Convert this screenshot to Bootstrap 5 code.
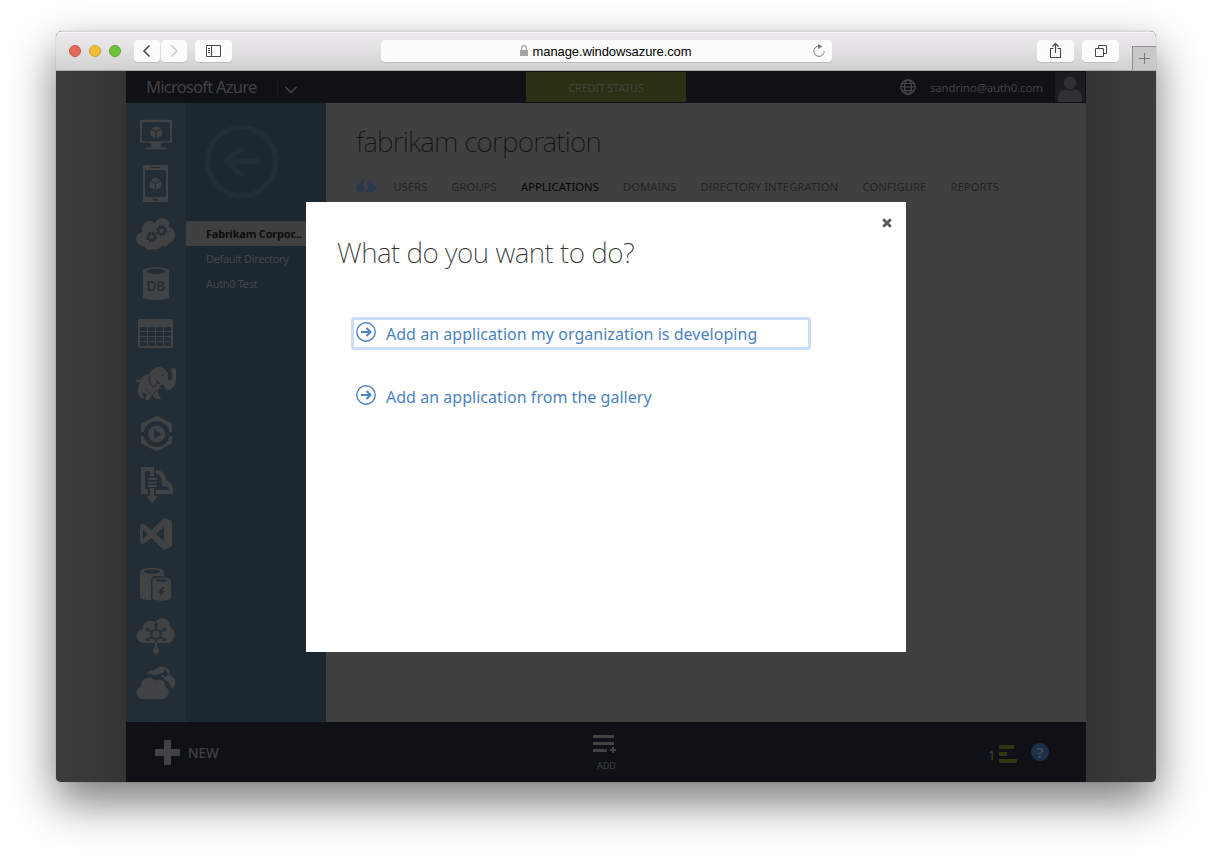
<!DOCTYPE html>
<html lang="en">
<head>
<meta charset="utf-8">
<title>Microsoft Azure</title>
<link href="https://cdn.jsdelivr.net/npm/bootstrap@5.3.0/dist/css/bootstrap.min.css" rel="stylesheet">
<style>
body{margin:0;width:1212px;height:862px;overflow:hidden;background:#fff;font-family:"Noto Sans","Open Sans",sans-serif;line-height:1.2}
svg{display:block;flex:none}
.desk{padding:31px 56px 80px}
.win{width:1100px;height:751px;border-radius:6px 6px 5px 5px;overflow:hidden;background:#3a3a39}
.win-shadow{width:1100px;height:751px;border-radius:6px 6px 5px 5px;box-shadow:0 0 1px rgba(0,0,0,.5),0 20px 46px rgba(0,0,0,.53)}
.chrome{height:40px;background:linear-gradient(#ebe9eb,#e4e2e4 40%,#d2d1d2);border-top:1px solid #d6d6d6;border-bottom:1px solid #aaa8aa;box-shadow:inset 0 1px #f7f7f7;padding-left:13px}
.light{width:12px;height:12px;border-radius:50%;border:1px solid}
.tool{height:22px;background:#fcfcfc;border-radius:4px;box-shadow:0 1px 0 #bfbebf;display:flex;align-items:center;justify-content:center}
.address{width:451px;font-family:"Liberation Sans",sans-serif;font-size:13px;color:#000;letter-spacing:-.1px;padding-top:1px}
.newtab{width:24px;height:24px;border:1px solid #918f91;border-width:1px 0 0 1px;background:#c9c8c9;margin-top:14px}
.stage{height:711px;padding:0 70px;background:linear-gradient(90deg,#3d3d3c 0,#343434 70px,#343434 1030px,#3b3b3a 1100px)}
.app{width:960px;height:711px;background:#404040}
.top{height:32px;background:#101116;color:#424242;padding-left:20px}
.brand-name{font-size:16.500px;width:132px;height:18px;line-height:18px;border-right:1px solid #1c1d22;letter-spacing:-.75px}
.credit{width:160px;height:30px;background:#2a3114;font-size:11px;color:#414438;padding-top:1px;letter-spacing:-.25px}
.mail{font-size:11.500px;letter-spacing:-.18px}
.rail{width:60px;background:#232d35;padding-top:6px;height:619px;overflow:hidden;fill:#414243}
.dirs{width:140px;background:#1d272f;height:619px;font-size:11px;color:#464747;letter-spacing:-.33px}
.dirs .item{height:25px;line-height:26px;padding-left:20px;white-space:nowrap}
.dirs .now{background:#404040;color:#0c0c0c;font-weight:700;letter-spacing:-.22px}
.content-pane{padding:20px 0 0 30px;color:#141414}
.content-pane h1{font-size:28px;font-weight:200;line-height:36px;margin:0;letter-spacing:-.8px}
.tabs{font-size:11.300px;gap:24.200px;color:#232323;margin-top:21px;height:14px;line-height:14px;letter-spacing:0}
.foot{height:60px;background:#101116;color:#424242}
.help{width:18px;height:18px;border-radius:50%;background:#1d304a;color:#4a4d51;font-size:15px;font-weight:600;line-height:18px;text-align:center;margin:21px 0 0 14px}
.ask{left:306px;top:202px;width:600px;height:450px;background:#fff;padding:30px 30px 30px 31px}
.ask h2{font-size:28px;font-weight:200;color:#333;line-height:40px;margin:0;letter-spacing:-.5px}
.ask .choice{width:460px;height:33px;margin-left:14px;color:#4d82bf;font-size:16px;border:3px solid transparent;border-radius:3px;text-decoration:none;padding-left:2px;gap:10px;letter-spacing:.03px}
.ask .choice span{padding-top:2px}
.ask .on{border-color:#c9defd}
.ask .x{right:14px;top:16px}
</style>
</head>
<body>
<svg width="0" height="0" class="position-absolute"><defs>
<g id="cube"><path d="M0-6 5-3.500 0-1-5-3.500Z"/><path d="M-5.900-2.600-.6.100V6.200L-5.900 3.500ZM5.900-2.600.6.100V6.200L5.900 3.500Z"/></g>
<g id="gear"><circle r="3.300" fill="none" stroke="#232d35" stroke-width="2.200"/><circle r="4.800" fill="none" stroke="#232d35" stroke-width="1.700" stroke-dasharray="1.885 1.885"/></g>
<path id="cloud" d="M19 34C7 34 9 20 17 20C16 12 25 10 29 13C34 6 45 9 44 18C51 21 50 33 42 34Z"/>
</defs></svg>
<div class="desk"><div class="win-shadow"><div class="win">
 <div class="chrome d-flex">
  <div class="d-flex gap-2 align-items-center">
   <span class="light" style="background:#e3695b;border-color:#cf5647"></span><span class="light" style="background:#efbf37;border-color:#d3a027"></span><span class="light" style="background:#72c141;border-color:#58a62d"></span>
  </div>
  <div class="d-flex" style="margin:8px 0 0 13px">
   <div class="tool" style="width:26px"><svg width="26" height="22" fill="none" stroke="#444" stroke-width="1.500"><path d="M15.500 5.500 10 11l5.500 5.500"/></svg></div>
   <div class="tool" style="width:26px;margin-left:1px"><svg width="26" height="22" fill="none" stroke="#ccc" stroke-width="1.500"><path d="M10.500 5.500 16 11l-5.500 5.500"/></svg></div>
   <div class="tool" style="width:37px;margin-left:8px"><svg width="37" height="22" fill="none" stroke="#484848"><path d="M11.500 5.500h14v11h-14ZM16.500 5v12M13 8.500h2M13 10.500h2M13 12.500h2"/></svg></div>
   <div class="tool address position-relative" style="margin-left:149px"><svg width="8" height="11" style="margin-right:5px;margin-left:-2px;margin-top:-2px" fill="#a3a3a3"><path d="M0 5h8v6H0Z"/><path d="M1.700 5V3a2.300 2.300 0 0 1 4.600 0V5" fill="none" stroke="#a3a3a3" stroke-width="1.200"/></svg>manage.windowsazure.com
    <svg class="position-absolute" style="right:6px;top:4px" width="14" height="14" fill="none" stroke="#777"><path d="M7 2A5.200 5.200 0 1 0 12.200 7.500"/><path d="M6 0 10.500 2.300 6 5Z" fill="#777" stroke="none"/></svg></div>
   <div class="tool" style="width:37px;margin-left:205px"><svg width="37" height="22" fill="none" stroke="#484848" stroke-width="1.100"><path d="M16.500 8.500h-3v9h10v-9h-3M18.500 13V4M15.500 6.500 18.500 3.500 21.500 6.500"/></svg></div>
   <div class="tool" style="width:37px;margin-left:8px"><svg width="37" height="22" fill="none" stroke="#484848"><path d="M13.500 8.500h8v8h-8ZM16.500 8V5.500h8v8H22"/></svg></div>
  </div>
  <div class="newtab" style="margin-left:13px"><svg width="23" height="23" stroke="#7c7b7c"><path d="M11.500 6v11M6 11.500h11"/></svg></div>
 </div>
 <div class="stage"><div class="app">
  <header class="top d-flex">
   <div class="brand-name" style="margin-top:7px">Microsoft Azure</div>
   <svg width="29" height="32" fill="none" stroke="#4a4a4b" stroke-width="1.400"><path d="M7.500 16 13 21.500 18.500 16"/></svg>
   <div class="credit d-flex align-items-center justify-content-center" style="margin:1px 0 0 219px">CREDIT STATUS</div>
   <svg width="16" height="16" style="margin:8px 0 0 214px" fill="none" stroke="#4b4b4c" stroke-width="1.200"><circle cx="8" cy="8" r="7.200"/><ellipse cx="8" cy="8" rx="3.500" ry="7.200"/><path d="M2 4.500h12M1 8h14M2 11.500h12"/></svg>
   <div class="mail" style="margin:10px 0 0 14px;width:125px">sandrino@auth0.com</div>
   <svg width="31" height="30" style="margin-top:1px"><path fill="#1c1d22" d="M0 0h30v30H0Z"/><ellipse cx="15" cy="11" rx="6" ry="6.500" fill="#303136"/><path d="M3 30C3 21 5 18 8 18L12 17.500Q15 20 19 17.500C25 18 27 20 27 30Z" fill="#303136"/></svg>
  </header>
  <div class="d-flex">
   <nav class="rail">
    <svg width="60" height="50"><path fill-rule="evenodd" d="M15 10H45Q46 10 46 11V32Q46 33 45 33H35Q34 36 36 37.500H39Q41 37.500 41 39.500H19Q19 37.500 21 37.500H24Q26 36 25 33H15Q14 33 14 32V11Q14 10 15 10ZM16 12.500V31.500H44V12.500Z" transform="translate(0 .7)"/><use href="#cube" x="30.300" y="23"/></svg>
    <svg width="60" height="50"><path fill-rule="evenodd" d="M18.500 6h22Q42 6 42 7.500v34q0 1.500-1.500 1.500H18.500Q17 43 17 41.500v-34Q17 6 18.500 6ZM19 11V38H40V11ZM25 8v1h9V8ZM27 39.500v2h5v-2Z"/><use href="#cube" x="29.500" y="24.500"/></svg>
    <svg width="60" height="50"><path d="M18 37C8 37 8 24 16 23C14 14 24 9 29 14C34 5 45 9 43 18C51 19 51 33 43 34Q41 39 36 37Q32 42 28 40Q22 43 18 37Z"/><use href="#gear" x="25.500" y="28"/><use href="#gear" x="35.500" y="21.700"/></svg>
    <svg width="60" height="50"><path d="M17 12C17 7 43 7 43 12V38C43 42 17 42 17 38Z"/><ellipse cx="30" cy="12.300" rx="9" ry="2.600" fill="#232d35"/><text x="29.800" y="32.300" text-anchor="middle" font-size="13.500" font-weight="600" fill="#232d35" font-family="Noto Sans">DB</text></svg>
    <svg width="60" height="50"><path fill-rule="evenodd" d="M13 10H46Q47 10 47 11V38Q47 39 46 39H13Q12 39 12 38V11Q12 10 13 10ZM14 18V22H21V18ZM22 18V22H29V18ZM30 18V22H37V18ZM38 18V22H45V18ZM14 23V27H21V23ZM22 23V27H29V23ZM30 23V27H37V23ZM38 23V27H45V23ZM14 28V32H21V28ZM22 28V32H29V28ZM30 28V32H37V28ZM38 28V32H45V28ZM14 33V37H21V33ZM22 33V37H29V33ZM30 33V37H37V33ZM38 33V37H45V33Z"/></svg>
    <svg width="60" height="50"><path d="M10 19.500Q10 22 14 21Q17 16 23 15Q26 9 33 8Q37 8 39 11Q43 13 42 18Q42 23 45 21Q47 19 46 15L45 10Q47 8 50 10L50 18Q50 29 43 31Q39 31 38 26Q35 25 33 27L35 29L31 32L35 40H30Q27 38 27 34L23 41H19L21 35L16 33L18 39H15L12 34Q12 27 14 23Q9 24 10 19.500Z"/><path d="M24 16Q22 24 27 28Q31 27 31 22L34 25" fill="none" stroke="#232d35" stroke-width="1.100"/><circle cx="36.500" cy="16.500" r="1.100" fill="#232d35"/><path d="M19 29L24 35M31 31L28 34" stroke="#232d35" fill="none"/></svg>
    <svg width="60" height="50"><path d="M30.700 6.700 46 14.500V23H43.500A13 13 0 0 0 17.800 23H15V14.500ZM30.700 42.300 46 34.500V27H43.500A13 13 0 0 1 17.800 27H15V34.500Z"/><circle cx="30.700" cy="25" r="8.600"/><path d="M28 20.300 35.500 25 28 29.500Z" fill="#232d35"/></svg>
    <svg width="60" height="50"><path d="M15 8H28V17H24V12H19V30H22V35H15ZM22 19h9v2h-9ZM22 22.500h9v2h-9ZM22 26h9v2h-9ZM24 29h4v8h4l-6 7.500L21 37h3ZM30 35V31H43Q43 27 36 27L36 22Q35 15 30 15V10.500Q39 12 40 21Q48 24 47 35Z"/></svg>
    <svg width="60" height="50"><path fill-rule="evenodd" d="M38 8.700 46 12V37L38 41 25.500 29 17 35.500 14 33.500V16L17 14.500 25.500 21ZM38 18 30 25 38 32ZM17 20V30L22 25Z"/></svg>
    <svg width="60" height="50"><path d="M14 12C14 8 38 8 38 12V17H28Q25 18 25 22V41C17 41 14 40 14 38Z"/><ellipse cx="26" cy="12.500" rx="8" ry="2" fill="#232d35"/><path d="M26.500 21C26.500 17.500 45 17.500 45 21V39C45 42.500 26.500 42.500 26.500 39Z"/><ellipse cx="35.500" cy="21.300" rx="5.500" ry="1.500" fill="#232d35"/><path d="M36.500 28 32 34h3l-1.500 4L39 32h-3l2-4Z" fill="#232d35"/></svg>
    <svg width="60" height="50"><use href="#cloud"/><path d="M29 34h2v6h-2Z"/><circle cx="30" cy="41.700" r="3"/><g stroke="#232d35" fill="none" stroke-width="1.600"><circle cx="30" cy="25.500" r="4.700" stroke-width="2"/><path d="M30 20.500V14M30 30.500V34M26 23 21 20M34 23 39 20M26 28 21 31M34 28 39 31"/></g><path fill="#232d35" d="M27.500 17H32.500L30 13ZM20 23V19H24ZM40 23V19H36ZM20 28V32H24ZM40 28V32H36Z"/></svg>
    <svg width="60" height="50"><path d="M21 15Q22 10 28 11.500Q34 5 42 10Q44 12 44 16Q51 20 49 26Q48 29 45 29Q44 23 39 21Q35 15 29 16.500Q25 14 21 15ZM17 40C9 40 9 28 15 28C14 19 25 15 29 22C34 18 40 23 39 27C45 30 43 39 37 40Z"/><path d="M30 18Q32 14 38 14V10.500L43 15 38 18.500V16Q34 16 32 19Z" fill="#232d35"/></svg>
    <svg width="60" height="20"><ellipse cx="31" cy="13" rx="1.500" ry=".8"/></svg>
   </nav>
   <aside class="dirs">
    <svg width="140" height="118" fill="none" stroke="#232d35"><circle cx="55.700" cy="58.500" r="34.200" stroke-width="5"/><path d="M41 58.500H74" stroke-width="6.500"/><path fill="#232d35" stroke="none" d="M51 44.500H59.500L46 58.500 59.500 72.500H51L36.500 58.500Z"/></svg>
    <div class="item now">Fabrikam Corpor...</div><div class="item">Default Directory</div><div class="item">Auth0 Test</div>
   </aside>
   <main class="content-pane">
    <h1>fabrikam corporation</h1>
    <div class="tabs d-flex"><svg width="20" height="14" fill="#28394e" style="margin:-1px -7px 0 0"><path d="M5 13Q0 13 0 9Q0 5 4 5Q4 0 9 0L6.500 7.500H9.500L7 13ZM9 13 13.500 6H10.500L12.500 1Q16 2 16 4.500Q20 5 20 9Q20 13 16 13Z"/></svg><span>USERS</span><span>GROUPS</span><span style="color:#050505">APPLICATIONS</span><span>DOMAINS</span><span>DIRECTORY INTEGRATION</span><span>CONFIGURE</span><span>REPORTS</span></div>
   </main>
  </div>
  <footer class="foot d-flex">
   <svg width="25" height="25" style="margin:18px 0 0 29px" fill="#424242"><path d="M9 0h7v9h9v7H16v9H9V16H0V9H9Z"/></svg>
   <div style="font-size:13.500px;margin:23px 0 0 8px;width:404px;font-weight:500">NEW</div>
   <div style="width:46px;margin-top:13px"><svg width="24" height="18" fill="#424242"><path d="M1 0h21v3H1ZM1 7h21v3H1ZM1 14h14v3H1ZM20 12h2v2h2v2h-2v2h-2v-2h-2v-2h2Z"/></svg><div style="font-size:9px;margin:8px 0 0 5px">ADD</div></div>
   <div style="font-size:13px;margin:26px 0 0 350px;width:11px">1</div>
   <svg width="18" height="18" style="margin-top:23px" fill="#2e3613"><path d="M0 0h15v4H0ZM0 7h8v4H0ZM0 14h18v4H0Z"/></svg>
   <div class="help">?</div>
  </footer>
 </div></div>
</div></div></div>
<section class="ask position-absolute" role="dialog">
 <svg class="x position-absolute" width="10" height="10" stroke="#5a5a5a" stroke-width="2.800"><path d="M1.200 1.200 8.800 8.800M8.800 1.200 1.200 8.800"/></svg>
 <h2>What do you want to do?</h2>
 <a class="choice on d-flex align-items-center" style="margin-top:45px"><svg width="20" height="20" style="margin-top:-3px" fill="none" stroke="#4d82bf" stroke-width="1.400"><circle cx="10" cy="10" r="9.200"/><path d="M5 10h9M10.500 6 14.500 10 10.500 14" stroke-width="2"/></svg><span>Add an application my organization is developing</span></a>
 <a class="choice d-flex align-items-center" style="margin-top:30px"><svg width="20" height="20" style="margin-top:-3px" fill="none" stroke="#4d82bf" stroke-width="1.400"><circle cx="10" cy="10" r="9.200"/><path d="M5 10h9M10.500 6 14.500 10 10.500 14" stroke-width="2"/></svg><span>Add an application from the gallery</span></a>
</section>
<script src="https://cdn.jsdelivr.net/npm/bootstrap@5.3.0/dist/js/bootstrap.bundle.min.js"></script>
</body>
</html>
